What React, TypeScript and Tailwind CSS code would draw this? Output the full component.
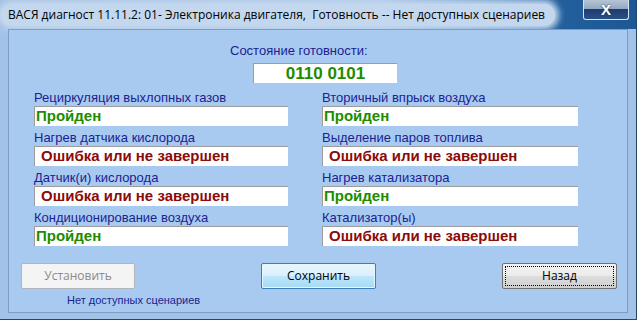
import React from "react";

type Item = { label: string; ok: boolean };

const LEFT: Item[] = [
  { label: "Рециркуляция выхлопных газов", ok: true },
  { label: "Нагрев датчика кислорода", ok: false },
  { label: "Датчик(и) кислорода", ok: false },
  { label: "Кондиционирование воздуха", ok: true },
];

const RIGHT: Item[] = [
  { label: "Вторичный впрыск воздуха", ok: true },
  { label: "Выделение паров топлива", ok: false },
  { label: "Нагрев катализатора", ok: true },
  { label: "Катализатор(ы)", ok: false },
];

function StatusField({ item, width }: { item: Item; width: string }) {
  return (
    <div className={`flex flex-col ${width}`}>
      <div className="h-[16px] text-[13px] leading-[16px] text-[#1b2290] font-['Liberation_Sans',Arial,sans-serif] whitespace-nowrap">
        {item.label}
      </div>
      <div className="h-[20px] bg-white border-t border-l border-[#9c9c9c] flex items-center">
        {item.ok ? (
          <span className="pl-[1px] text-[15px] font-bold text-[#208c00] font-['Liberation_Sans',Arial,sans-serif]">
            Пройден
          </span>
        ) : (
          <span className="pl-[6px] text-[15px] font-bold text-[#8c0a0a] font-['Liberation_Sans',Arial,sans-serif]">
            Ошибка или не завершен
          </span>
        )}
      </div>
    </div>
  );
}

function Column({ items, width }: { items: Item[]; width: string }) {
  return (
    <div className="flex flex-col gap-[4px]">
      {items.map((it) => (
        <StatusField key={it.label} item={it} width={width} />
      ))}
    </div>
  );
}

export default function App() {
  return (
    <div className="w-[637px] h-[320px] bg-[#a2c2e8] flex flex-col relative overflow-hidden border-r border-b border-[#24476e] font-['Open_Sans','Noto_Sans',sans-serif]">
      {/* Title bar */}
      <div className="h-[29px] flex items-center bg-[linear-gradient(90deg,#9fbde1_0%,#a9c5e6_60%,#4f86bb_80%,#225f9c_88%,#1d5894_100%)]">
        <div className="ml-[1px] h-[22px] flex items-center pl-[7px] pr-[10px] rounded-full bg-[#c3d7ee] shadow-[0_0_6px_4px_#c3d7ee]">
          <span className="text-[12px] text-black whitespace-nowrap">
            ВАСЯ диагност 11.11.2: 01- Электроника двигателя,&nbsp; Готовность -- Нет доступных сценариев
          </span>
        </div>
      </div>

      {/* Close button */}
      <div className="absolute top-0 right-[7px] w-[46px] h-[20px] border border-t-0 border-[#d6e4f2] rounded-b-[3px] bg-[linear-gradient(180deg,#b6c5d6_0%,#93a9c0_45%,#1f3d70_50%,#2a4f86_100%)] flex items-center justify-center">
        <span className="text-white font-bold text-[15px] leading-none font-['Liberation_Sans',Arial,sans-serif] [text-shadow:0_0_2px_#1a2e50]">
          X
        </span>
      </div>

      {/* Client area */}
      <div className="mx-[8px] h-[284px] border border-[#7c9dc6] bg-[#a9caf0] flex flex-col">
        <div className="mt-[13px] ml-[221px] h-[16px] text-[13px] leading-[16px] text-[#1b2290] font-['Liberation_Sans',Arial,sans-serif]">
          Состояние готовности:
        </div>
        <div className="mt-[4px] ml-[244px] w-[144px] h-[20px] bg-white border-t border-l border-[#9c9c9c] flex items-center justify-center">
          <span className="text-[17px] font-bold text-[#1e8c00] font-['Liberation_Sans',Arial,sans-serif]">
            0110 0101
          </span>
        </div>

        <div className="mt-[7px] ml-[25px] flex gap-[34px]">
          <Column items={LEFT} width="w-[254px]" />
          <Column items={RIGHT} width="w-[256px]" />
        </div>

        <div className="mt-[17px] ml-[12px] flex gap-[126px]">
          <div className="w-[114px] h-[26px] border border-[#b2b6ba] rounded-[2px] bg-[#f4f4f4] flex items-center justify-center text-[12px] text-[#8a8a8a]">
            Установить
          </div>
          <div className="w-[115px] h-[26px] border border-[#3c7fb1] rounded-[2px] bg-[linear-gradient(180deg,#eaf6fd_0%,#d9f0fc_50%,#bee6fd_51%,#a7d9f5_100%)] shadow-[inset_0_0_0_1px_#e8f6fe] flex items-center justify-center text-[12px] text-black">
            Сохранить
          </div>
          <div className="w-[115px] h-[26px] border border-[#707070] rounded-[2px] bg-[linear-gradient(180deg,#f2f2f2_0%,#ebebeb_50%,#dddddd_51%,#cfcfcf_100%)] p-[2px]">
            <div className="w-full h-full border border-dotted border-black flex items-center justify-center text-[12px] text-black">
              Назад
            </div>
          </div>
        </div>

        <div className="mt-[4px] ml-[58px] text-[11px] leading-[14px] text-[#1b2290] font-['Liberation_Sans',Arial,sans-serif]">
          Нет доступных сценариев
        </div>
      </div>
    </div>
  );
}
